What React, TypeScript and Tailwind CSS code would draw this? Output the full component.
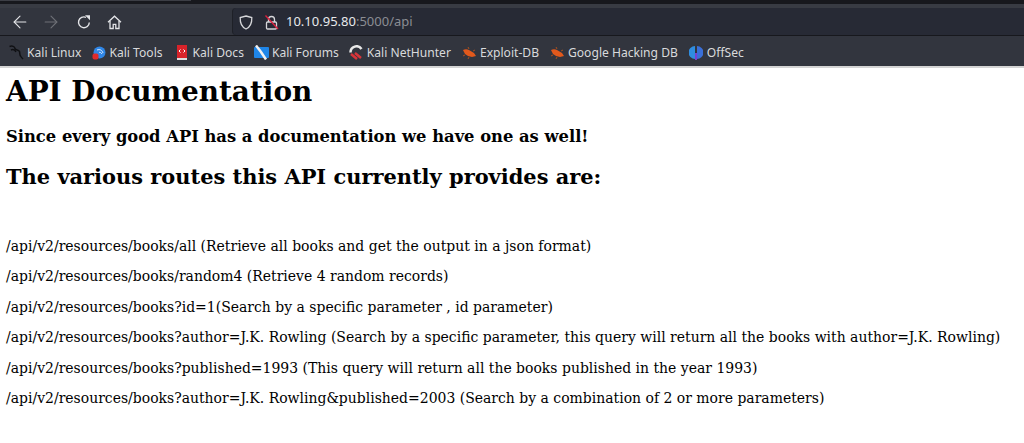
import * as React from 'react';
import { ArrowLeft, ArrowRight } from 'lucide-react';

const routes = [
  '/api/v2/resources/books/all (Retrieve all books and get the output in a json format)',
  '/api/v2/resources/books/random4 (Retrieve 4 random records)',
  '/api/v2/resources/books?id=1(Search by a specific parameter , id parameter)',
  '/api/v2/resources/books?author=J.K. Rowling (Search by a specific parameter, this query will return all the books with author=J.K. Rowling)',
  '/api/v2/resources/books?published=1993 (This query will return all the books published in the year 1993)',
  '/api/v2/resources/books?author=J.K. Rowling&published=2003 (Search by a combination of 2 or more parameters)',
];

function Bug() {
  return (
    <svg width="15" height="12" viewBox="0 0 15 12">
      <path d="M1 3c2-1 4-1 6 0l5 3 2 3-4 1-4-1-3-2z" fill="#e2591c" />
      <path d="M3 8L1 9M7 10l-1 2M7 2L6 0M11 4l2-1" stroke="#a8501f" strokeWidth="1" />
    </svg>
  );
}

function Bookmark({ icon, label, gap }: { icon: React.ReactNode; label: string; gap: string }) {
  return (
    <div className={`flex items-center gap-[3px] ${gap}`}>
      <span className="flex h-4 w-[15px] items-center justify-center">{icon}</span>
      <span>{label}</span>
    </div>
  );
}

export default function App() {
  return (
    <div className="h-[443px] w-[1024px] overflow-hidden bg-white">
      <div className="h-[4px] bg-[#17181d]">
        <div className="h-[1px] w-[191px] bg-[#3c3e45]" />
      </div>
      <div className="h-[4px] bg-[#383b43]" />
      <div className="flex h-[27px] items-center bg-[#32353e]">
        <div className="flex w-[232px] items-center pl-[10px] pt-[1px] text-[#e4e5e8]">
          <ArrowLeft size={20} strokeWidth={1.3} />
          <ArrowRight size={20} strokeWidth={1.3} className="ml-[11px] text-[#6f7177]" />
          <svg width="14" height="14" viewBox="0 0 14 14" fill="none" className="ml-[16px]">
            <path d="M12.300 7.500A5.400 5.400 0 1 1 9 2.300" stroke="currentColor" strokeWidth="1.400" />
            <path d="M8 0.300h5v5z" fill="currentColor" />
          </svg>
          <svg width="15" height="15" viewBox="0 0 15 15" fill="none" stroke="currentColor" strokeWidth="1.300" className="ml-[16px]">
            <path d="M1 7.200L7.500 1.200 14 7.200" />
            <path d="M3 6v7.500h3.200V9.300h2.600v4.200H12V6" />
          </svg>
        </div>
        <div className="flex h-[27px] flex-1 items-center rounded-tl-[4px] rounded-bl-[4px] border-l border-[#1e2027] bg-[#272a35] pl-[6px] pt-[1px] text-[13px] font-['Noto_Sans',sans-serif]">
          <svg width="14" height="15" viewBox="0 0 14 15" fill="none" stroke="#d5d6d9" strokeWidth="1.300">
            <path d="M7 1l5.800 1.500c.2 5-1.300 9.500-5.800 11.500C2.500 12 1 7.500 1.200 2.500z" />
          </svg>
          <span className="relative ml-[12px] text-[#d5d6d9]">
            <svg width="13" height="15" viewBox="0 0 13 15" fill="none" stroke="currentColor" strokeWidth="1.300" className="block">
              <path d="M3.500 7V4.500a3 3 0 0 1 6 0V7" />
              <rect x="1.500" y="7" width="10" height="7" rx="1" />
            </svg>
            <svg width="14" height="15" viewBox="0 0 14 15" className="absolute left-0 top-0">
              <path d="M0.500 0.500L13 14" stroke="#e0203e" strokeWidth="1.300" />
            </svg>
          </span>
          <span className="ml-[8px] text-[#e8e9eb]">10.10.95.80</span>
          <span className="text-[#8b8d93]">:5000/api</span>
        </div>
      </div>
      <div className="h-[1px] bg-[#17181d]" />
      <div className="flex h-[30px] items-center bg-[#32353e] pl-[9px] pt-[4px] text-[12.100px] text-[#d9dadc] font-['Noto_Sans',sans-serif]">
        <Bookmark
          gap="mr-[10px]"
          label="Kali Linux"
          icon={
            <svg width="15" height="15" viewBox="0 0 15 15" fill="none" stroke="#101114" strokeWidth="1.500">
              <path d="M0.500 1.500c3-1 5 0 5.500 2 .5 2 3.500 1 4.500 3 .5 2 0 3 1 4.500.5 1 1.500 2 2.500 3M2 5c2-1 4 0 5 2" />
            </svg>
          }
        />
        <Bookmark
          gap="mr-[12px]"
          label="Kali Tools"
          icon={
            <svg width="14" height="14" viewBox="0 0 14 14">
              <circle cx="7.500" cy="6.500" r="6" fill="#2f86e6" />
              <rect x="0.500" y="7.500" width="6" height="6" rx="2" fill="#e02b2b" />
              <path d="M5 4c3-1 5 0 6 3M7 6.500c1-.5 2 0 3 1.500" stroke="#d8e8fa" strokeWidth="1" fill="none" />
            </svg>
          }
        />
        <Bookmark
          gap="mr-[10px]"
          label="Kali Docs"
          icon={
            <svg width="12" height="15" viewBox="0 0 12 15">
              <rect x="1" y="0" width="10" height="13" fill="#d8232a" />
              <rect x="1" y="13" width="10" height="2" fill="#ddd" />
              <path d="M4.500 4.500L3 6l1.500 1.500M7.500 4.500L9 6 7.500 7.500" stroke="#fff" strokeWidth="1" fill="none" />
            </svg>
          }
        />
        <Bookmark
          gap="mr-[10px]"
          label="Kali Forums"
          icon={
            <svg width="15" height="15" viewBox="0 0 15 15">
              <rect x="0" y="2" width="15" height="11" rx="1" fill="#1f86e8" />
              <path d="M2 0.500l5 6.500 5 7.500" stroke="#f0f0f0" strokeWidth="2.500" fill="none" />
            </svg>
          }
        />
        <Bookmark
          gap="mr-[11px]"
          label="Kali NetHunter"
          icon={
            <svg width="15" height="15" viewBox="0 0 15 15" fill="none">
              <path d="M1.500 7.500a6 6 0 0 1 11-3.500" stroke="#e8e8e8" strokeWidth="2.500" />
              <path d="M2 9l6 5M6 8l6 5" stroke="#d8343a" strokeWidth="2.500" />
            </svg>
          }
        />
        <Bookmark gap="mr-[11px]" label="Exploit-DB" icon={<Bug />} />
        <Bookmark gap="mr-[11px]" label="Google Hacking DB" icon={<Bug />} />
        <Bookmark
          gap=""
          label="OffSec"
          icon={
            <svg width="14" height="15" viewBox="0 0 14 15">
              <path d="M6 1a6.500 6.500 0 0 0 0 13z" fill="#2f8de0" />
              <path d="M8 1a6.500 6.500 0 0 1 0 13z" fill="#3a6fd8" />
              <rect x="6" y="8" width="2" height="7" fill="#7a3fd0" />
            </svg>
          }
        />
      </div>
      <div className="h-[2px] bg-[#d4d4d4]" />
      <main className="px-[6px] font-['DejaVu_Serif',serif] text-black">
        <h1 className="mt-[7px] text-[27.900px] font-bold leading-[34px]">API Documentation</h1>
        <h3 className="mt-[18px] text-[16.340px] font-bold leading-[20px]">Since every good API has a documentation we have one as well!</h3>
        <h2 className="mt-[17px] text-[20.930px] font-bold leading-[26px]">The various routes this API currently provides are:</h2>
        <div className="mt-[47px] flex flex-col gap-[11px] text-[13.970px] leading-[19.400px]">
          {routes.map(r => (
            <p key={r} className="whitespace-nowrap">{r}</p>
          ))}
        </div>
      </main>
    </div>
  );
}
